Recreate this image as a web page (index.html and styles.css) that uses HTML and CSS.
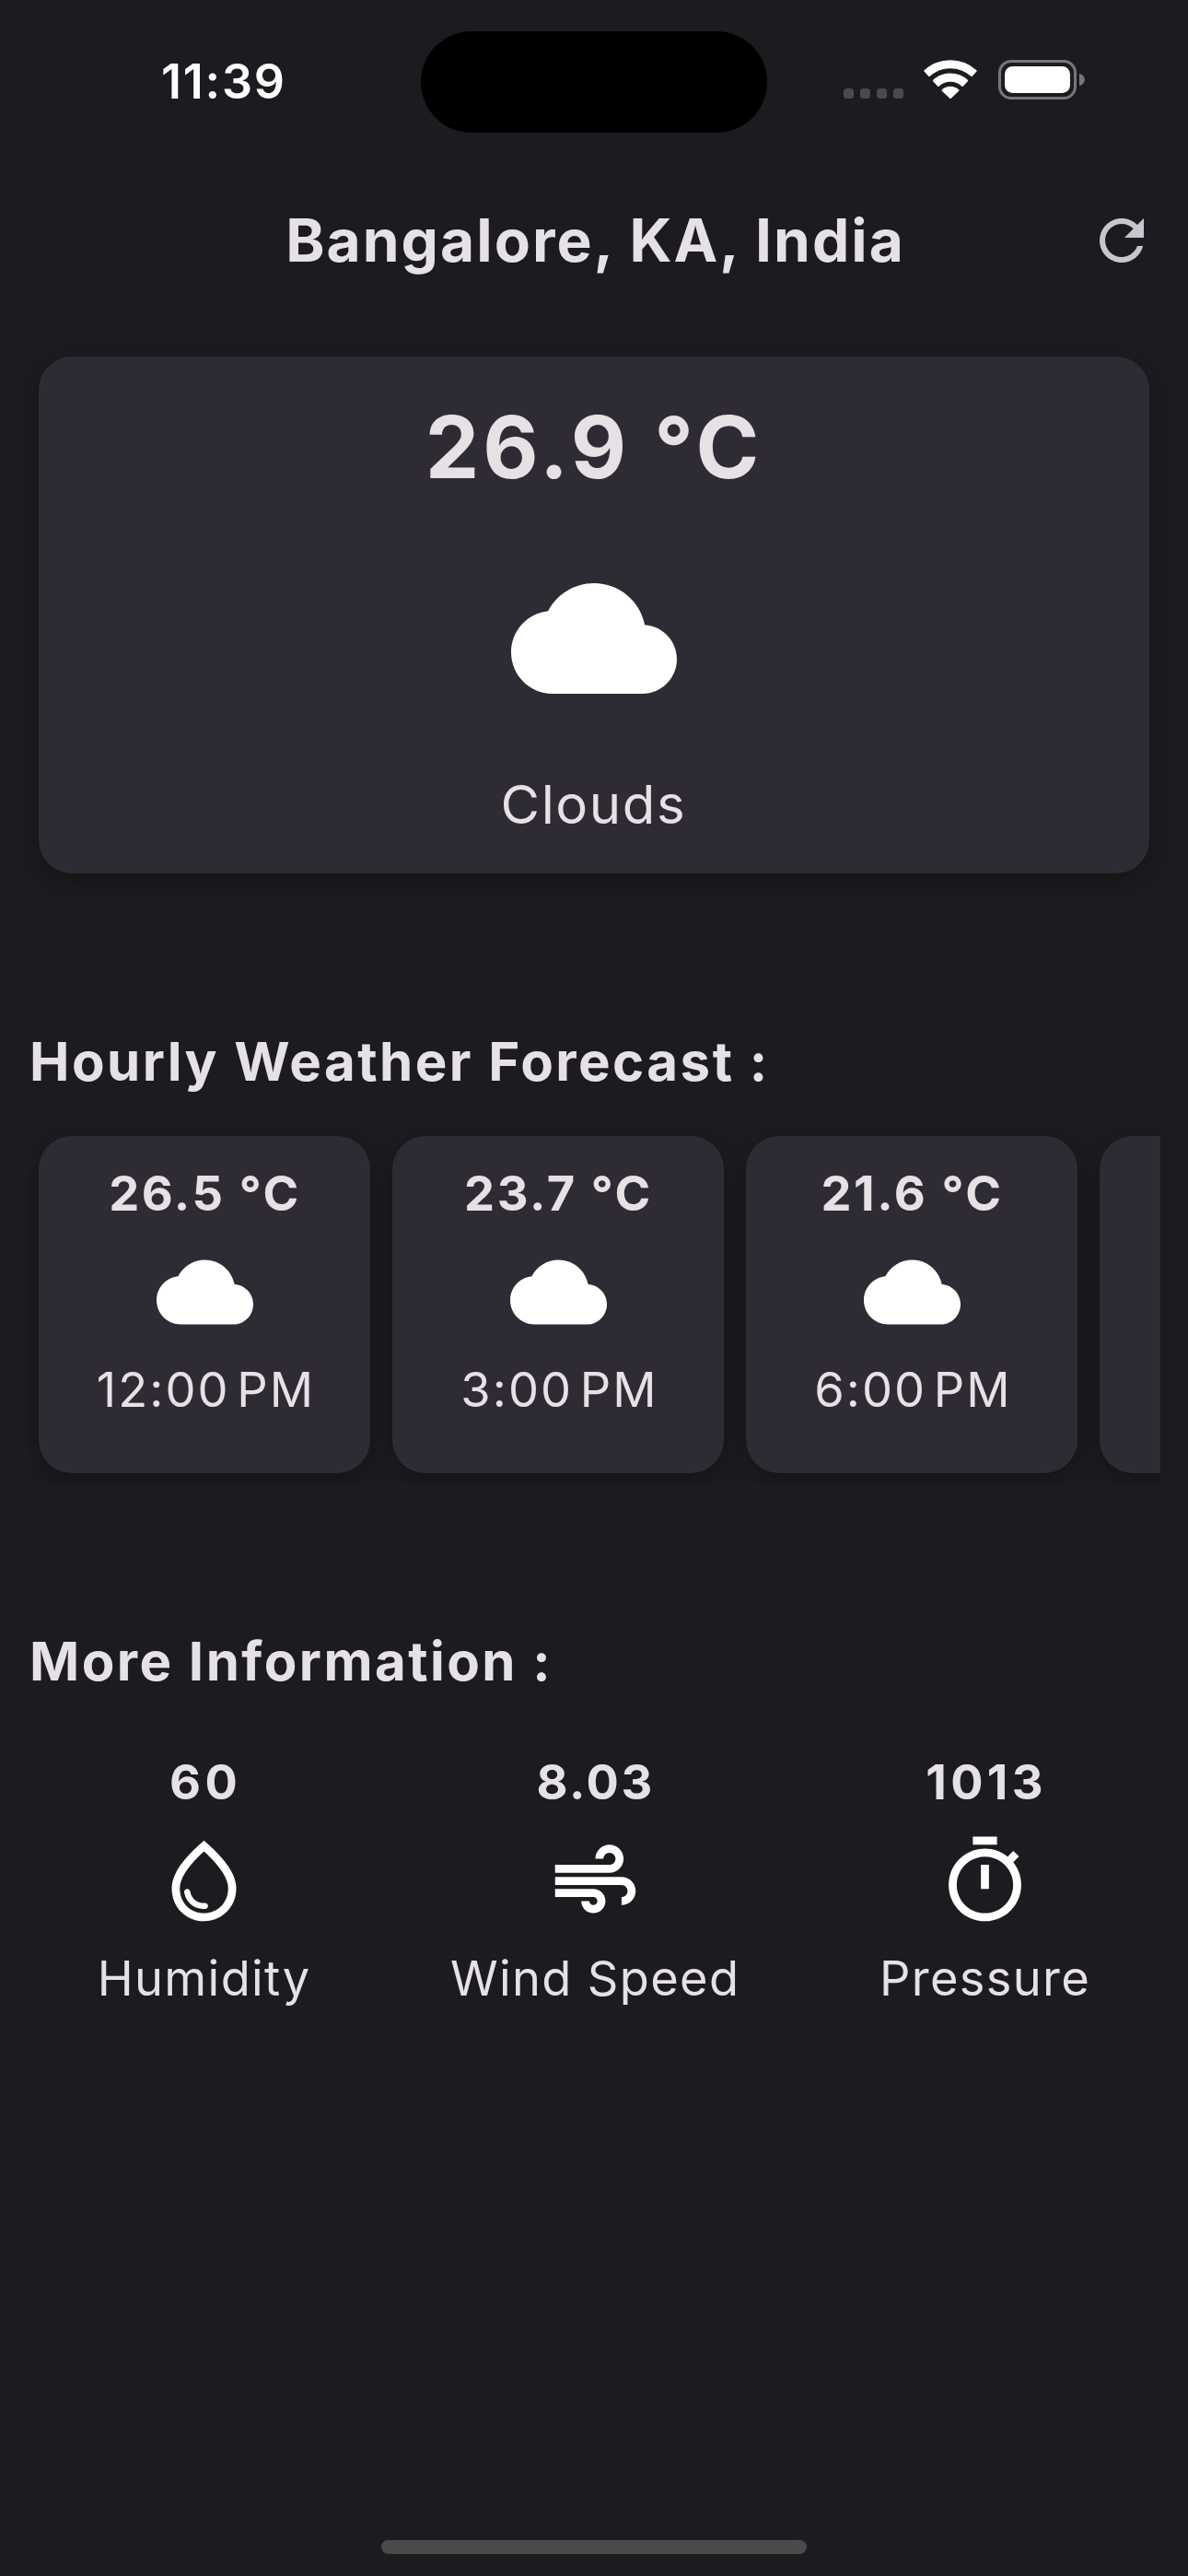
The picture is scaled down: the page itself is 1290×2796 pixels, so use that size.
FILE: index.html
```html
<!DOCTYPE html>
<html lang="en">
<head>
<meta charset="utf-8">
<title>Weather</title>
<link rel="stylesheet" href="styles.css">
</head>
<body>
<svg class="sprite" aria-hidden="true">
  <symbol id="cloud" viewBox="0 0 24 24"><path d="M19.35 10.04C18.67 6.59 15.64 4 12 4 9.11 4 6.6 5.64 5.35 8.04 2.34 8.36 0 10.91 0 14c0 3.31 2.69 6 6 6h13c2.76 0 5-2.24 5-5 0-2.64-2.05-4.78-4.65-4.96z"/></symbol>
  <symbol id="drop" viewBox="0 0 24 24"><path d="M12 2c-5.33 4.55-8 8.48-8 11.8 0 4.98 3.8 8.2 8 8.2s8-3.22 8-8.2c0-3.32-2.67-7.25-8-11.8zm0 18c-3.35 0-6-2.57-6-6.2 0-2.34 1.95-5.44 6-9.14 4.05 3.7 6 6.79 6 9.14 0 3.63-2.65 6.2-6 6.2zm-4.17-6c.37 0 .67.26.74.62.41 2.22 2.28 2.98 3.64 2.87.43-.02.79.32.79.75 0 .4-.32.73-.72.75-2.13.13-4.62-1.09-5.19-4.12-.08-.45.28-.87.74-.87z"/></symbol>
  <symbol id="air" viewBox="0 0 24 24"><path d="M14.5 17c0 1.65-1.35 3-3 3s-3-1.35-3-3h2c0 .55.45 1 1 1s1-.45 1-1-.45-1-1-1H2v-2h9.5c1.65 0 3 1.35 3 3zM19 6.5C19 4.57 17.43 3 15.5 3S12 4.57 12 6.5h2c0-.83.67-1.5 1.5-1.5s1.5.67 1.5 1.5S16.33 8 15.5 8H2v2h13.5c1.93 0 3.5-1.57 3.5-3.5zM18.5 11H2v2h16.5c.83 0 1.5.67 1.5 1.5s-.67 1.5-1.5 1.5v2c1.93 0 3.5-1.57 3.5-3.5S20.43 11 18.5 11z"/></symbol>
  <symbol id="timer" viewBox="0 0 24 24"><path d="M15 1H9v2h6V1zm-4 13h2V8h-2v6zm8.03-6.61l1.42-1.42c-.43-.51-.9-.99-1.41-1.41l-1.42 1.42C16.07 4.74 14.12 4 12 4c-4.97 0-9 4.03-9 9s4.02 9 9 9 9-4.03 9-9c0-2.12-.74-4.07-1.97-5.61zM12 20c-3.87 0-7-3.13-7-7s3.13-7 7-7 7 3.13 7 7-3.13 7-7 7z"/></symbol>
</svg>

<header class="status-bar">
  <time class="clock">11:39</time>
  <div class="island"></div>
  <div class="indicators">
    <div class="dots"><i></i><i></i><i></i><i></i></div>
    <svg class="wifi" viewBox="0 0 58 43">
      <path d="M1.3 11.9A41.3 41.3 0 0 1 56.7 11.9L52 17A34.3 34.3 0 0 0 6 17Z"/>
      <path d="M10.9 22.5A27 27 0 0 1 47.1 22.5L42.2 27.9A19.7 19.7 0 0 0 15.8 27.9Z"/>
      <path d="M20.5 33.1A12.7 12.7 0 0 1 37.5 33.1L29 41.1Z"/>
    </svg>
    <svg class="battery" viewBox="0 0 94 43">
      <rect class="battery-shell" x="1.5" y="1.5" width="82" height="40" rx="12.5"/>
      <rect class="battery-level" x="7" y="7" width="71" height="29" rx="8.5"/>
      <path class="battery-cap" d="M88 14.7C92 16 93.8 18.5 93.8 21.5S92 27 88 28.3Z"/>
    </svg>
  </div>
</header>

<div class="app-bar">
  <h1 class="place">Bangalore, KA, India</h1>
  <svg class="refresh" viewBox="0 0 24 24"><path d="M17.65 6.35C16.2 4.9 14.21 4 12 4c-4.42 0-7.99 3.58-7.99 8s3.57 8 7.99 8c3.73 0 6.84-2.55 7.73-6h-2.08c-.82 2.33-3.04 4-5.65 4-3.31 0-6-2.69-6-6s2.69-6 6-6c1.66 0 3.14.69 4.22 1.78L13 11h7V4l-2.35 2.35z"/></svg>
</div>

<main class="content">
  <section class="card current">
    <div class="current-temp">26.9 °C</div>
    <svg class="current-icon"><use href="#cloud"/></svg>
    <div class="current-sky">Clouds</div>
  </section>

  <h2 class="heading">Hourly Weather Forecast :</h2>
  <section class="hourly">
    <article class="card hour"><div class="value">26.5 °C</div><svg class="icon"><use href="#cloud"/></svg><div class="label time">12:00<span class="gap">&#8239;</span>PM</div></article>
    <article class="card hour"><div class="value">23.7 °C</div><svg class="icon"><use href="#cloud"/></svg><div class="label time">3:00<span class="gap">&#8239;</span>PM</div></article>
    <article class="card hour"><div class="value">21.6 °C</div><svg class="icon"><use href="#cloud"/></svg><div class="label time">6:00<span class="gap">&#8239;</span>PM</div></article>
    <article class="card hour"></article>
  </section>

  <h2 class="heading heading-more">More Information :</h2>
  <section class="details">
    <div class="detail"><div class="value wide">60</div><svg class="icon"><use href="#drop"/></svg><div class="label">Humidity</div></div>
    <div class="detail"><div class="value">8.03</div><svg class="icon"><use href="#air"/></svg><div class="label">Wind Speed</div></div>
    <div class="detail"><div class="value wide">1013</div><svg class="icon"><use href="#timer"/></svg><div class="label">Pressure</div></div>
  </section>
</main>

<div class="home-indicator"></div>
</body>
</html>
```
FILE: styles.css
```css
* { box-sizing: border-box; }

body {
  margin: 0;
  width: 1290px;
  height: 2796px;
  display: flex;
  flex-direction: column;
  overflow: hidden;
  background: #1c1b1f;
  color: #e6e1e5;
  font-family: Inter, sans-serif;
}

svg { display: block; flex: none; fill: #fff; }
.sprite { position: absolute; width: 0; height: 0; }

/* Status bar */
.status-bar {
  display: grid;
  grid-template-columns: 457px 376px 457px;
  align-items: center;
  height: 177px;
}
.clock {
  padding-left: 175px;
  color: #fff;
  font-size: 52px;
  font-weight: 600;
  line-height: 64px;
  letter-spacing: 1.8px;
}
.island { height: 110px; border-radius: 55px; background: #000; }
.indicators {
  display: flex;
  align-items: flex-end;
  padding: 0 0 4px 83px;
}
.dots { display: flex; gap: 7px; margin-bottom: 1px; }
.dots i { width: 11px; height: 11px; border-radius: 3.5px; background: #4a494c; }
.wifi {
  width: 58px;
  height: 43px;
  margin-left: 22px;
  stroke: #fff;
  stroke-width: 2;
  stroke-linejoin: round;
}
.battery { width: 94px; height: 43px; margin-left: 23px; }
.battery-shell { fill: none; stroke: #777679; stroke-width: 3; }
.battery-cap { fill: #777679; }

/* App bar */
.app-bar {
  display: grid;
  grid-template-columns: 1fr auto 1fr;
  align-items: center;
  height: 168px;
  padding: 0 36px;
}
.place {
  grid-column: 2;
  margin: 0;
  padding: 0 0 0 3px;
  font-size: 64px;
  font-weight: 660;
  line-height: 80px;
  letter-spacing: 2.05px;
}
.refresh { justify-self: end; width: 72px; height: 72px; fill: #cac4d0; }

/* Content */
.content { padding: 30px 30px 0; }
.card {
  display: flex;
  flex-direction: column;
  align-items: center;
  border-radius: 36px;
  background: #2e2b35;
  box-shadow: 0 8px 22px rgba(0, 0, 0, .27);
}

.current { height: 561px; margin: 12px 12px 0; padding-top: 41px; }
.current-temp {
  font-size: 93px;
  font-weight: 700;
  line-height: 114px;
  letter-spacing: 4px;
}
.current-icon { width: 180px; height: 180px; margin: 61px 0 54px; }
.current-sky {
  padding-right: 1px;
  font-size: 58.2px;
  font-weight: 370;
  line-height: 72px;
  letter-spacing: 1.6px;
}

.heading {
  margin: 168px 0 33px 2px;
  font-size: 58.2px;
  font-weight: 660;
  line-height: 72px;
  letter-spacing: 2.45px;
}
.heading-more { margin: 156px 0 63px 2px; }

.hourly {
  display: flex;
  gap: 24px;
  height: 390px;
  padding: 12px;
  overflow: hidden;
}
.hour { flex: none; width: 360px; padding-top: 30px; }

.value {
  padding-left: 1px;
  font-size: 52.4px;
  font-weight: 660;
  line-height: 64px;
  letter-spacing: 2.6px;
}
.value.wide { padding-left: 3px; letter-spacing: 4.3px; }
.icon { width: 105px; height: 105px; margin: 22.5px 0 21.5px; }
.label {
  font-size: 52.4px;
  font-weight: 370;
  line-height: 64px;
  letter-spacing: 1.35px;
  white-space: nowrap;
}
.label.time { padding-left: 3px; letter-spacing: 2.1px; }
.gap { letter-spacing: -2px; }

.details { display: flex; justify-content: space-around; }
.detail { display: flex; flex-direction: column; align-items: center; }

.home-indicator {
  width: 462px;
  height: 15px;
  margin: auto auto 24px;
  border-radius: 8px;
  background: #4b4b4b;
}
```
